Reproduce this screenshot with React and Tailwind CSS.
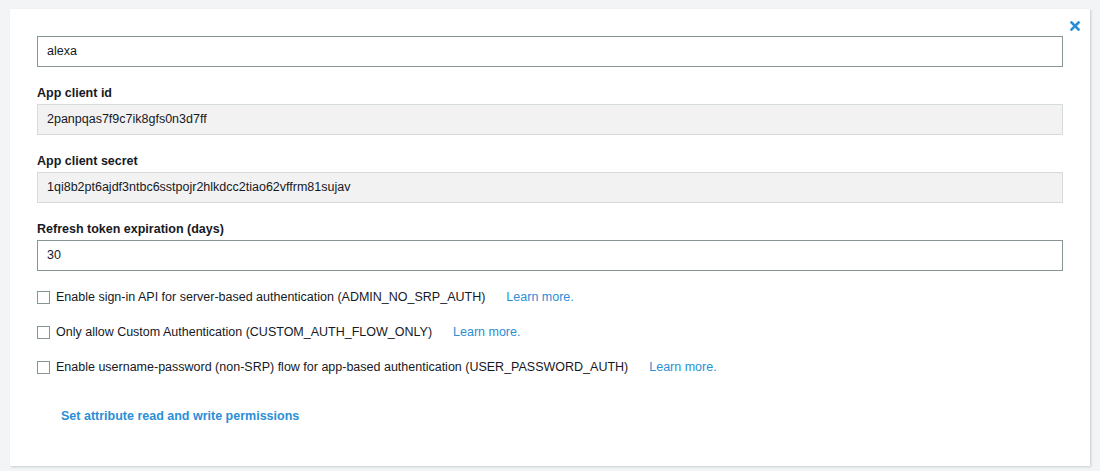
const fields = [
  { label: 'App client id', value: '2panpqas7f9c7ik8gfs0n3d7ff', readOnly: true },
  { label: 'App client secret', value: '1qi8b2pt6ajdf3ntbc6sstpojr2hlkdcc2tiao62vffrm81sujav', readOnly: true },
  { label: 'Refresh token expiration (days)', value: '30', readOnly: false },
];

const flows = [
  'Enable sign-in API for server-based authentication (ADMIN_NO_SRP_AUTH)',
  'Only allow Custom Authentication (CUSTOM_AUTH_FLOW_ONLY)',
  'Enable username-password (non-SRP) flow for app-based authentication (USER_PASSWORD_AUTH)',
];

const App = () => {
  return (
    <div className="min-h-[471px] bg-[#f2f4f5] pt-[9px] pl-[10px] pr-[10px] text-[12.5px] text-[#16191f]" style={{ fontFamily: '"Liberation Sans", Arial, sans-serif' }}>
      <div className="relative bg-white pt-[27px] pl-[27px] pr-[27px] pb-[42px] shadow-[1px_1px_2px_rgba(0,28,36,0.18)]">
        <button className="absolute top-[12px] right-[10px] w-[10px] h-[10px] text-[#2a8fd6]">
          <svg viewBox="0 0 10 10" width="10" height="10">
            <path d="M1.5 1.5 L8.5 8.5 M8.5 1.5 L1.5 8.5" stroke="currentColor" strokeWidth="2.6" strokeLinecap="square" />
          </svg>
        </button>

        {/* Name */}
        <div className="h-[31px] border border-[#879596] flex items-center px-[9px]">alexa</div>

        {/* Fields */}
        {fields.map((f) => (
          <div key={f.label} className="mt-[18px]">
            <div className="font-bold leading-[16px] mb-[3px]">{f.label}</div>
            <div
              className={
                f.readOnly
                  ? 'h-[31px] border border-[#d5dbdb] bg-[#f2f2f2] flex items-center px-[9px]'
                  : 'h-[31px] border border-[#879596] flex items-center px-[9px]'
              }
            >
              {f.value}
            </div>
          </div>
        ))}

        {/* Auth flows */}
        <div className="mt-[16px] flex flex-col gap-[15px]">
          {flows.map((label) => (
            <div key={label} className="h-[20px] flex items-center">
              <span className="w-[13px] h-[13px] border border-[#879596] bg-white mr-[6px] shrink-0"></span>
              <span>{label}</span>
              <a className="ml-[21px] text-[#2a8fd6] cursor-pointer">Learn more.</a>
            </div>
          ))}
        </div>

        <div className="mt-[31px] pl-[24px] leading-[16px]">
          <a className="font-bold text-[#2a8fd6] cursor-pointer">Set attribute read and write permissions</a>
        </div>
      </div>
    </div>
  );
};

export default App;
